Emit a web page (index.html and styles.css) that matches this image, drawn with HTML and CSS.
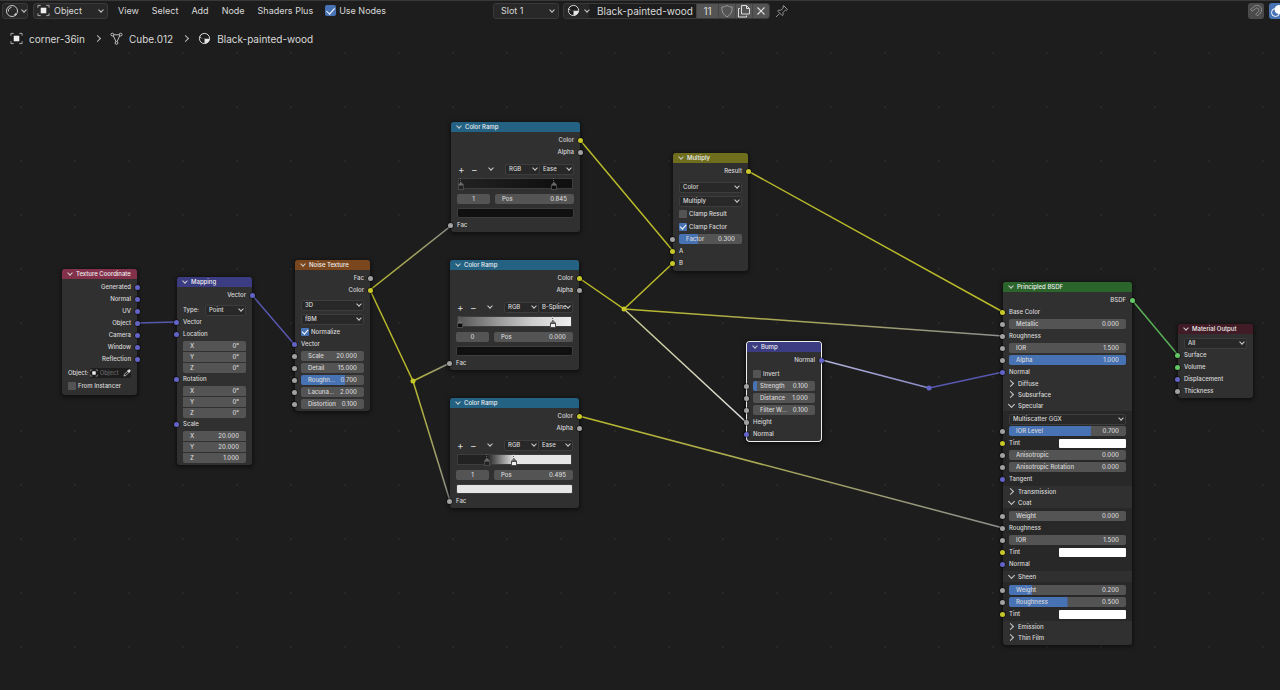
FILE: index.html
```html
<!DOCTYPE html>
<html lang="en">
<head>
<meta charset="utf-8">
<title>Shader Editor</title>
<link rel="stylesheet" href="styles.css">
</head>
<body>
<svg class="defs" aria-hidden="true">
  <defs>
    <linearGradient id="yellow-gray"><stop offset="0" stop-color="#b9b92b"/><stop offset="1" stop-color="#8f8f8f"/></linearGradient>
    <linearGradient id="yellow-white"><stop offset="0" stop-color="#c9c98c"/><stop offset="1" stop-color="#e2e2e2"/></linearGradient>
    <linearGradient id="white-blue"><stop offset="0" stop-color="#b4b4dc"/><stop offset="1" stop-color="#8a8ac8"/></linearGradient>
  </defs>
  <symbol id="i-object" viewBox="0 0 14 14"><path d="M1 4V1.5H4M10 1.5h3V4M13 10v2.500h-3M4 12.500H1V10" fill="none" stroke="#b5b5b5"/><rect x="4" y="4" width="6" height="6" fill="#eee"/></symbol>
  <symbol id="i-material" viewBox="0 0 14 14"><circle cx="7" cy="7" r="5.500" fill="#1d1d1d" stroke="#e6e6e6"/><path d="M7 7V1.500A5.500 5.500 0 0 0 2 5Q4 7 7 7ZM7 7V12.500A5.500 5.500 0 0 0 12.500 7Q10 7.500 7 7ZM7 1.500V7Q4 7.500 1.500 6A5.500 5.500 0 0 1 7 1.500Z" fill="#e6e6e6"/></symbol>
</svg>

<header class="toolbar">
  <div class="group">
    <button class="box editor" aria-label="Editor type">
      <svg width="14" height="14" viewBox="0 0 14 14" fill="none" stroke="#c8c8c8"><circle cx="7" cy="7" r="5.500"/><path d="M3.500 7.500A3.500 3.500 0 0 1 6.500 3.500" /><circle cx="10.500" cy="10.500" r=".8" fill="#c8c8c8"/></svg>
      <i class="caret"></i>
    </button>
    <span class="box drop mode">
      <svg width="13" height="13"><use href="#i-object"/></svg>
      <select aria-label="Shader type"><option>Object</option></select><i class="caret"></i>
    </span>
    <nav class="menu"><button>View</button><button>Select</button><button>Add</button><button>Node</button><button>Shaders Plus</button></nav>
    <label class="use"><input type="checkbox" class="tick" checked>Use Nodes</label>
  </div>
  <div class="group">
    <span class="box drop slot"><select aria-label="Slot"><option>Slot 1</option></select><i class="caret"></i></span>
    <div class="box material">
      <button class="browse" aria-label="Browse material"><svg width="13" height="13"><use href="#i-material"/></svg><i class="caret"></i></button>
      <input class="name" aria-label="Material name" value="Black-painted-wood">
      <button class="seg users">11</button>
      <button class="seg" aria-label="Fake user"><svg width="14" height="14" viewBox="0 0 14 14" fill="none" stroke="#999"><path d="M7 1.500C5.500 2.500 3.500 3 1.800 3C1.600 8 3.500 11 7 12.800C10.500 11 12.400 8 12.200 3C10.500 3 8.500 2.500 7 1.500Z"/></svg></button>
      <button class="seg" aria-label="New material"><svg width="14" height="14" viewBox="0 0 14 14" fill="none" stroke="#dcdcdc"><path d="M4.500 1.500h5l3 3v5.500h-8ZM9.500 1.500v3h3M3 4.500H1.500v8.500h8V11.500"/></svg></button>
      <button class="seg" aria-label="Unlink"><svg width="10" height="10" viewBox="0 0 10 10" stroke="#dcdcdc" stroke-width="1.200"><path d="M1.500 1.500l7 7M8.500 1.500l-7 7"/></svg></button>
    </div>
    <button class="pin" aria-label="Pin"><svg width="14" height="14" viewBox="0 0 14 14" fill="none" stroke="#929292"><path d="M8.500 1.500l4 4-1 .8-1-.3-2.500 2.500.2 2.300-1 .8-4.500-4.500.8-1 2.300.2L8.300 4 8 3ZM4.500 9.500L1 13"/></svg></button>
  </div>
  <div class="group end">
    <button class="toggle" aria-label="Snap"><svg width="14" height="14" viewBox="0 0 14 14" fill="none" stroke="#8f8f8f"><path d="M1.500 5.500L4.500 3A4.500 4.500 0 0 1 11.500 9L8.500 12L6.800 10.300L9.500 7.500A2 2 0 0 0 6.300 4.800L3.200 7.200Z"/></svg></button>
    <button class="toggle on" aria-label="Overlays"><svg width="14" height="14" viewBox="0 0 14 14" fill="none" stroke="#fff"><circle cx="5.500" cy="8.500" r="4"/><circle cx="9" cy="5.500" r="4" fill="#fff"/></svg></button>
  </div>
</header>

<nav class="crumbs" aria-label="Path">
  <a href="#"><svg width="13" height="13"><use href="#i-object"/></svg>corner-36in</a>
  <i class="next"></i>
  <a href="#"><svg width="13" height="13" viewBox="0 0 14 14" fill="none" stroke="#c8c8c8"><path d="M3 3h8M3 3l4 8.500L11 3"/><g fill="#1d1d1d"><circle cx="2.500" cy="2.800" r="1.500"/><circle cx="11.500" cy="2.800" r="1.500"/><circle cx="7" cy="11.800" r="1.500"/></g></svg>Cube.012</a>
  <i class="next"></i>
  <a href="#"><svg width="13" height="13"><use href="#i-material"/></svg>Black-painted-wood</a>
</nav>

<main class="canvas">
  <svg class="links" aria-hidden="true">
    <g class="v"><path d="M137 323L177 322M252 295L294 344M929 388L1003 372"/></g>
    <g class="y"><path d="M370 290L413 381M580 140L673 251M579 278L624 309L673 263M748 171L1003 312"/></g>
    <g class="g"><path d="M1132 300L1178 355"/></g>
    <path stroke="url(#yellow-gray)" d="M370 290L452 225"/>
    <path stroke="url(#yellow-gray)" d="M413 381L450 363"/>
    <path stroke="url(#yellow-gray)" d="M413 381L450 501"/>
    <path stroke="url(#yellow-gray)" d="M624 309L1003 336"/>
    <path stroke="url(#yellow-gray)" d="M579 416L1003 528"/>
    <path stroke="url(#yellow-white)" d="M624 309L746 422"/>
    <path stroke="url(#white-blue)" d="M822 360L929 388"/>
    <circle cx="413" cy="381" r="2.500" fill="#c7c729"/><circle cx="624" cy="309" r="2.500" fill="#c7c729"/><circle cx="929" cy="388" r="2.500" fill="#6363c7"/>
  </svg>

  <section class="node texcoord">
    <h2><button class="fold" aria-label="Collapse"></button>Texture Coordinate</h2>
    <div class="row out">Generated<i class="s v"></i></div>
    <div class="row out">Normal<i class="s v"></i></div>
    <div class="row out">UV<i class="s v"></i></div>
    <div class="row out">Object<i class="s v"></i></div>
    <div class="row out">Camera<i class="s v"></i></div>
    <div class="row out">Window<i class="s v"></i></div>
    <div class="row out">Reflection<i class="s v"></i></div>
    <div class="row gap2"><label for="obj">Object:</label>
      <span class="pick"><svg width="8" height="8"><use href="#i-object"/></svg><input id="obj" placeholder="Object"><svg width="8" height="8" viewBox="0 0 8 8"><path d="M1 7l.5-1.800L4.500 2.200l1.300 1.300L2.800 6.500Z" fill="none" stroke="#ccc" stroke-width=".8"/><path d="M4 1.800L6.200 4l.6-.8L7.500 2.200Q8 .8 7 .4 6.300 0 5.500.8L4.800 1.300Z" fill="#ddd"/></svg></span></div>
    <label class="row gap1 check"><input type="checkbox" class="tick">From Instancer</label>
  </section>

  <section class="node mapping">
    <h2><button class="fold" aria-label="Collapse"></button>Mapping</h2>
    <div class="row out">Vector<i class="s v"></i></div>
    <div class="row gap3 split"><label for="mtype">Type:</label><span class="sel"><select id="mtype"><option>Point</option></select></span></div>
    <div class="row"><i class="s v"></i>Vector</div>
    <div class="row"><i class="s v"></i>Location</div>
    <div class="xyz"><label class="num">X<input value="0°"></label><label class="num">Y<input value="0°"></label><label class="num">Z<input value="0°"></label></div>
    <div class="row"><i class="s v"></i>Rotation</div>
    <div class="xyz"><label class="num">X<input value="0°"></label><label class="num">Y<input value="0°"></label><label class="num">Z<input value="0°"></label></div>
    <div class="row"><i class="s v"></i>Scale</div>
    <div class="xyz"><label class="num">X<input value="20.000"></label><label class="num">Y<input value="20.000"></label><label class="num">Z<input value="1.000"></label></div>
  </section>

  <section class="node noise">
    <h2><button class="fold" aria-label="Collapse"></button>Noise Texture</h2>
    <div class="row out">Fac<i class="s"></i></div>
    <div class="row out">Color<i class="s y"></i></div>
    <div class="row gap3"><span class="sel"><select aria-label="Dimensions"><option>3D</option></select></span></div>
    <div class="row gap2"><span class="sel"><select aria-label="Type"><option>fBM</option></select></span></div>
    <label class="row gap1 check"><input type="checkbox" class="tick" checked>Normalize</label>
    <div class="row"><i class="s v"></i>Vector</div>
    <div class="row"><i class="s"></i><label class="num">Scale<input value="20.000"></label></div>
    <div class="row"><i class="s"></i><label class="num">Detail<input value="15.000"></label></div>
    <div class="row"><i class="s"></i><label class="num" style="--fill:70%">Roughn...<input value="0.700"></label></div>
    <div class="row"><i class="s"></i><label class="num">Lacuna...<input value="2.000"></label></div>
    <div class="row"><i class="s"></i><label class="num">Distortion<input value="0.100"></label></div>
  </section>

  <section class="node ramp ramp-a">
    <h2><button class="fold" aria-label="Collapse"></button>Color Ramp</h2>
    <div class="row out">Color<i class="s y"></i></div>
    <div class="row out">Alpha<i class="s"></i></div>
    <div class="row tools"><button>+</button><button>−</button><button class="more" aria-label="Tools"></button><span class="sel"><select aria-label="Mode"><option>RGB</option></select></span><span class="sel"><select aria-label="Interpolation"><option>Ease</option></select></span></div>
    <div class="band"><i class="stop" style="left:2%;--c:#222"></i><i class="stop" style="left:84.5%;--c:#0c0c0c"></i></div>
    <div class="row pos"><input class="idx" aria-label="Stop" value="1"><label class="num">Pos<input value="0.845"></label></div>
    <button class="swatch" aria-label="Stop color"></button>
    <div class="row gap1"><i class="s"></i>Fac</div>
  </section>

  <section class="node ramp ramp-b">
    <h2><button class="fold" aria-label="Collapse"></button>Color Ramp</h2>
    <div class="row out">Color<i class="s y"></i></div>
    <div class="row out">Alpha<i class="s"></i></div>
    <div class="row tools"><button>+</button><button>−</button><button class="more" aria-label="Tools"></button><span class="sel"><select aria-label="Mode"><option>RGB</option></select></span><span class="sel"><select aria-label="Interpolation"><option>B-Spline</option></select></span></div>
    <div class="band"><i class="stop" style="left:2%;--c:#0c0c0c"></i><i class="stop" style="left:84%;--c:#eee"></i></div>
    <div class="row pos"><input class="idx" aria-label="Stop" value="0"><label class="num">Pos<input value="0.000"></label></div>
    <button class="swatch" aria-label="Stop color"></button>
    <div class="row gap1"><i class="s"></i>Fac</div>
  </section>

  <section class="node ramp ramp-c">
    <h2><button class="fold" aria-label="Collapse"></button>Color Ramp</h2>
    <div class="row out">Color<i class="s y"></i></div>
    <div class="row out">Alpha<i class="s"></i></div>
    <div class="row tools"><button>+</button><button>−</button><button class="more" aria-label="Tools"></button><span class="sel"><select aria-label="Mode"><option>RGB</option></select></span><span class="sel"><select aria-label="Interpolation"><option>Ease</option></select></span></div>
    <div class="band"><i class="stop" style="left:26%;--c:#222"></i><i class="stop" style="left:49.5%;--c:#eee"></i></div>
    <div class="row pos"><input class="idx" aria-label="Stop" value="1"><label class="num">Pos<input value="0.495"></label></div>
    <button class="swatch light" aria-label="Stop color"></button>
    <div class="row gap1"><i class="s"></i>Fac</div>
  </section>

  <section class="node mix">
    <h2><button class="fold" aria-label="Collapse"></button>Multiply</h2>
    <div class="row out">Result<i class="s y"></i></div>
    <div class="row gap4"><span class="sel"><select aria-label="Data type"><option>Color</option></select></span></div>
    <div class="row gap2"><span class="sel"><select aria-label="Blend mode"><option>Multiply</option></select></span></div>
    <label class="row gap1 check"><input type="checkbox" class="tick">Clamp Result</label>
    <label class="row gap1 check"><input type="checkbox" class="tick" checked>Clamp Factor</label>
    <div class="row"><i class="s"></i><label class="num" style="--fill:30%">Factor<input value="0.300"></label></div>
    <div class="row"><i class="s y"></i>A</div>
    <div class="row"><i class="s y"></i>B</div>
  </section>

  <section class="node bump selected">
    <h2><button class="fold" aria-label="Collapse"></button>Bump</h2>
    <div class="row out">Normal<i class="s v"></i></div>
    <label class="row gap2 check"><input type="checkbox" class="tick">Invert</label>
    <div class="row"><i class="s"></i><label class="num" style="--fill:7%">Strength<input value="0.100"></label></div>
    <div class="row"><i class="s"></i><label class="num">Distance<input value="1.000"></label></div>
    <div class="row"><i class="s"></i><label class="num">Filter W...<input value="0.100"></label></div>
    <div class="row"><i class="s"></i>Height</div>
    <div class="row"><i class="s v"></i>Normal</div>
  </section>

  <section class="node bsdf">
    <h2><button class="fold" aria-label="Collapse"></button>Principled BSDF</h2>
    <div class="row out">BSDF<i class="s g"></i></div>
    <div class="row"><i class="s y"></i>Base Color</div>
    <div class="row"><i class="s"></i><label class="num">Metallic<input value="0.000"></label></div>
    <div class="row"><i class="s"></i>Roughness</div>
    <div class="row"><i class="s"></i><label class="num">IOR<input value="1.500"></label></div>
    <div class="row"><i class="s"></i><label class="num" style="--fill:100%">Alpha<input value="1.000"></label></div>
    <div class="row"><i class="s v"></i>Normal</div>
    <button class="panel shut">Diffuse</button>
    <button class="panel shut">Subsurface</button>
    <button class="panel">Specular</button>
    <div class="inner">
      <div class="row"><span class="sel"><select aria-label="Distribution"><option>Multiscatter GGX</option></select></span></div>
      <div class="row"><i class="s"></i><label class="num" style="--fill:70%">IOR Level<input value="0.700"></label></div>
      <div class="row"><i class="s y"></i>Tint<button class="tint" aria-label="Specular tint"></button></div>
      <div class="row"><i class="s"></i><label class="num">Anisotropic<input value="0.000"></label></div>
      <div class="row"><i class="s"></i><label class="num">Anisotropic Rotation<input value="0.000"></label></div>
      <div class="row"><i class="s v"></i>Tangent</div>
    </div>
    <button class="panel shut">Transmission</button>
    <button class="panel">Coat</button>
    <div class="inner">
      <div class="row"><i class="s"></i><label class="num">Weight<input value="0.000"></label></div>
      <div class="row"><i class="s"></i>Roughness</div>
      <div class="row"><i class="s"></i><label class="num">IOR<input value="1.500"></label></div>
      <div class="row"><i class="s y"></i>Tint<button class="tint" aria-label="Coat tint"></button></div>
      <div class="row"><i class="s v"></i>Normal</div>
    </div>
    <button class="panel">Sheen</button>
    <div class="inner">
      <div class="row"><i class="s"></i><label class="num" style="--fill:20%">Weight<input value="0.200"></label></div>
      <div class="row"><i class="s"></i><label class="num" style="--fill:50%">Roughness<input value="0.500"></label></div>
      <div class="row"><i class="s y"></i>Tint<button class="tint" aria-label="Sheen tint"></button></div>
    </div>
    <button class="panel shut">Emission</button>
    <button class="panel shut">Thin Film</button>
  </section>

  <section class="node output">
    <h2><button class="fold" aria-label="Collapse"></button>Material Output</h2>
    <div class="row gap3"><span class="sel"><select aria-label="Target"><option>All</option></select></span></div>
    <div class="row"><i class="s g"></i>Surface</div>
    <div class="row"><i class="s g"></i>Volume</div>
    <div class="row"><i class="s v"></i>Displacement</div>
    <div class="row"><i class="s"></i>Thickness</div>
  </section>
</main>
</body>
</html>
```

FILE: styles.css
```css
* { box-sizing: border-box; }
body {
  margin: 0;
  min-height: 100vh;
  overflow: hidden;
  position: relative;
  color: #d9d9d9;
  font: 10px/12px Inter, "Liberation Sans", sans-serif;
  background: #1d1d1d radial-gradient(circle, #282828 1px, transparent 1px) -6px 26px / 54px 54px;
}
button, input, select {
  appearance: none;
  margin: 0;
  padding: 0;
  border: 0;
  background: none;
  color: inherit;
  font: inherit;
  min-width: 0;
}
svg { display: block; flex: none; }
a { color: inherit; text-decoration: none; }
.defs { position: absolute; width: 0; height: 0; }

/* Toolbar */
.toolbar {
  position: relative;
  z-index: 2;
  display: grid;
  grid-template-columns: 1fr auto 1fr;
  align-items: center;
  height: 20px;
  padding-left: 2px;
  border-top: 1px solid #383838;
  font-size: 9px;
}
.group { display: flex; align-items: center; white-space: nowrap; }
.end { justify-content: flex-end; gap: 5px; margin-right: -5px; }
.box {
  display: flex;
  align-items: center;
  height: 16px;
  border: 1px solid #3a3a3a;
  border-radius: 3px;
  background: #282828;
}
.editor { width: 26px; padding: 0 3px 0 2px; gap: 2px; }
.mode { width: 75px; margin-left: 5px; padding: 0 3px; gap: 4px; }
.slot { width: 66px; margin-right: 4px; padding: 0 3px 0 7px; }
.drop select { flex: 1; }
.caret {
  flex: none;
  width: 4px;
  height: 4px;
  margin: 0 1px 2px;
  border: solid #c8c8c8;
  border-width: 0 1px 1px 0;
  transform: rotate(45deg);
}
.menu { display: flex; gap: 13px; margin: 0 12px 0 10px; }
.use { display: flex; align-items: center; gap: 3px; }
.tick {
  flex: none;
  display: grid;
  place-items: center;
  width: 11px;
  height: 11px;
  border-radius: 2px;
  background: #545454;
}
.tick:checked { background: #4772b3; }
.tick:checked::after {
  content: "";
  width: 35%;
  height: 65%;
  margin-bottom: 15%;
  border: solid #fff;
  border-width: 0 1px 1px 0;
  transform: rotate(42deg);
}
.material { overflow: hidden; }
.browse { display: flex; align-items: center; gap: 4px; width: 25px; padding-left: 3px; }
.name { width: 107px; height: 14px; padding-left: 8px; background: #1d1d1d; font-size: 10px; }
.seg {
  display: grid;
  place-items: center;
  width: 17px;
  height: 14px;
  background: #545454;
  border-left: 1px solid #444;
}
.users { width: 22px; font-size: 10px; }
.pin { margin-left: 5px; }
.toggle { display: grid; place-items: center; width: 16px; height: 16px; border-radius: 3px; background: #4b4b4b; }
.toggle.on { background: #4772b3; }

.crumbs {
  position: relative;
  z-index: 2;
  display: flex;
  align-items: center;
  gap: 10px;
  padding: 12px 10px;
}
.crumbs a { display: flex; align-items: center; gap: 6px; }
.next { width: 5px; height: 5px; border: solid #bbb; border-width: 1px 1px 0 0; transform: rotate(45deg); }

/* Node canvas */
.canvas { position: absolute; inset: 0; font-size: 6px; font-weight: 500; }
.links { position: absolute; inset: 0; width: 100%; height: 100%; fill: none; stroke-width: 1.5; }
.links .v { stroke: #5858b0; }
.links .y { stroke: #b9b92b; }
.links .g { stroke: #58b058; }

.node {
  --head: #246283;
  position: absolute;
  width: 75px;
  padding-bottom: 2px;
  border-radius: 3px;
  background: #303030;
  box-shadow: 0 1px 4px 1px rgb(0 0 0 / 50%);
}
.node.selected { box-shadow: 0 0 0 1px #eee, 0 1px 4px 2px rgb(0 0 0 / 50%); }
.texcoord { left: 62px; top: 269px; padding-bottom: 3px; --head: #83314a; }
.mapping { left: 177px; top: 277px; --head: #3c3c83; }
.noise { left: 295px; top: 260px; padding-bottom: 1px; --head: #79461d; }
.ramp { width: 129px; padding-bottom: 1px; }
.ramp-a { left: 451px; top: 122px; --band: linear-gradient(90deg, #222, #101010 83%); }
.ramp-b { left: 450px; top: 260px; --band: linear-gradient(90deg, #555, #999 35%, #ccc 65%, #eee); }
.ramp-c { left: 450px; top: 398px; --band: linear-gradient(90deg, #222 26%, #e6e6e6 49.5%); }
.mix { left: 673px; top: 153px; --head: #6e6e1d; }
.bump { left: 747px; top: 342px; width: 74px; padding-bottom: 1px; --head: #3c3c83; }
.bsdf { left: 1003px; top: 282px; width: 129px; --head: #2b652b; }
.output { left: 1178px; top: 324px; padding-bottom: 1px; --head: #411c27; }

.node h2 {
  display: flex;
  align-items: center;
  gap: 4px;
  height: 10px;
  margin: 0 0 2px;
  padding-left: 6px;
  border-radius: 3px 3px 0 0;
  background: var(--head);
  font: inherit;
  color: #eee;
  white-space: nowrap;
}
.fold, .more, .panel::before, .sel::after {
  content: "";
  flex: none;
  width: 4px;
  height: 4px;
  margin-bottom: 2px;
  border: solid #ccc;
  border-width: 0 1px 1px 0;
  transform: rotate(45deg);
}
.row {
  position: relative;
  display: flex;
  align-items: center;
  height: 12px;
  padding: 0 6px;
  white-space: nowrap;
}
.out { justify-content: flex-end; }
.gap1 { margin-top: 1px; }
.gap2 { margin-top: 2px; }
.gap3 { margin-top: 3px; }
.gap4 { margin-top: 4px; }
.s {
  position: absolute;
  left: -3px;
  width: 5px;
  height: 5px;
  border-radius: 50%;
  background: #a1a1a1;
  box-shadow: 0 0 0 1px rgb(0 0 0 / 35%);
}
.out .s { left: auto; right: -3px; }
.s.v { background: #6363c7; }
.s.y { background: #c7c729; }
.s.g { background: #63c763; }

.num {
  flex: 1;
  display: flex;
  align-items: center;
  min-width: 0;
  height: 10px;
  padding: 0 7px;
  border-radius: 2px;
  background: linear-gradient(#4772b3, #4772b3) 0 0 / var(--fill, 0%) 100% no-repeat #545454;
}
.num input { flex: 1; width: 0; height: 10px; text-align: right; }
.xyz { display: grid; gap: 1px; margin: 1px 6px 0; border-radius: 2px; overflow: hidden; }
.xyz .num { border-radius: 0; }
.check { gap: 2px; }
.check .tick { width: 8px; height: 8px; border-radius: 1px; }
.sel {
  flex: 1;
  display: flex;
  align-items: center;
  min-width: 0;
  height: 11px;
  padding: 0 2px 0 3px;
  border: 1px solid #3d3d3d;
  border-radius: 2px;
  background: #282828;
}
.sel select { flex: 1; }
.sel::after { width: 3px; height: 3px; }
.split { gap: 6px; }
.pick { flex: 1; display: flex; align-items: center; gap: 2px; height: 10px; min-width: 0; margin-left: 1px; border-radius: 2px; background: #1d1d1d; }
.pick input { flex: 1; width: 0; }
.pick input::placeholder { color: #666; }

.tools { margin-top: 5px; }
.tools button:not(.more) { width: 13px; padding-left: 1px; text-align: left; font-size: 10px; font-weight: 400; line-height: 10px; }
.tools .more { margin: 0 12px 2px 6px; }
.tools .sel:last-child { border-left: 0; }
.band {
  position: relative;
  height: 11px;
  margin: 3px 7px 0;
  border: 1px solid #3d3d3d;
  background: var(--band);
}
.stop {
  position: absolute;
  bottom: -2px;
  width: 6px;
  height: 5px;
  margin-left: -3px;
  border: 1px solid #4a4a4a;
  background: var(--c);
}
.stop::before {
  content: "";
  position: absolute;
  left: -1px;
  bottom: 4px;
  border: 3px solid transparent;
  border-top: 0;
  border-bottom-color: #6a6a6a;
}
.stop::after {
  content: "";
  position: absolute;
  left: 1px;
  bottom: 6px;
  height: 5px;
  border-left: 1px dotted #666;
}
.pos { gap: 5px; margin-top: 4px; }
.idx { width: 33px; height: 10px; border-radius: 2px; background: #545454; text-align: center; }
.swatch { display: block; width: calc(100% - 12px); height: 10px; margin: 3px 6px 0; border: 1px solid #3d3d3d; border-radius: 2px; background: #101010; }
.swatch.light { background: #e6e6e6; }

.panel { display: flex; align-items: center; gap: 4px; width: 100%; height: 11px; padding-left: 6px; text-align: left; }
.panel.shut::before { margin: 0 1px 0 -1px; transform: rotate(-45deg); }
.inner { padding: 2px 0 1px; background: #282828; }
.tint { width: 67px; height: 9px; margin-left: auto; border-radius: 1px; background: #fff; }
```
